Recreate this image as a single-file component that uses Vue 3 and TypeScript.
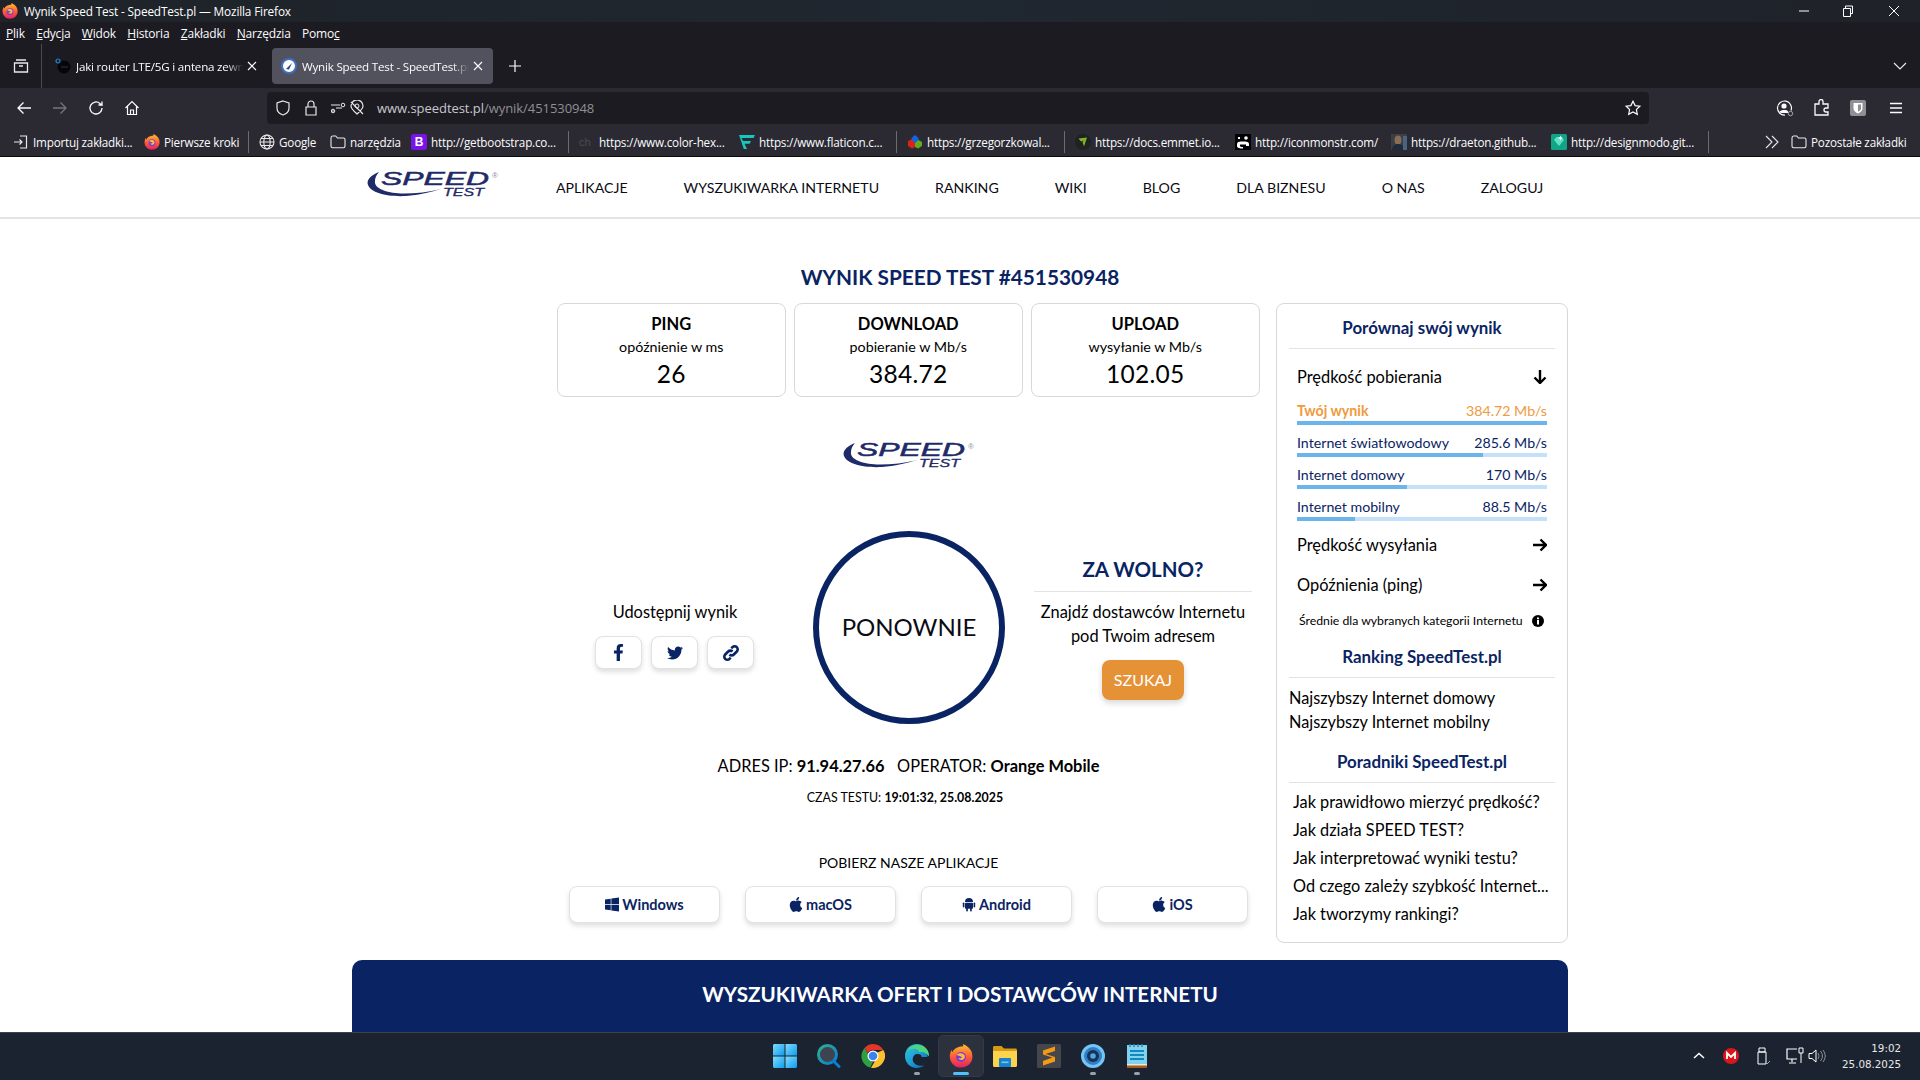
<script setup lang="ts">
interface Bookmark { icon: string; label: string; w: number; sep?: boolean }
const menu = [
  { before: '', key: 'P', after: 'lik' },
  { before: '', key: 'E', after: 'dycja' },
  { before: '', key: 'W', after: 'idok' },
  { before: '', key: 'H', after: 'istoria' },
  { before: '', key: 'Z', after: 'akładki' },
  { before: '', key: 'N', after: 'arzędzia' },
  { before: 'Pomo', key: 'c', after: '' },
]
const bookmarks: Bookmark[] = [
  { icon: 'i-import', label: 'Importuj zakładki...', w: 131 },
  { icon: 'i-firefox', label: 'Pierwsze kroki', w: 105, sep: true },
  { icon: 'i-globe', label: 'Google', w: 71 },
  { icon: 'i-folder', label: 'narzędzia', w: 81 },
  { icon: 'boot', label: 'http://getbootstrap.co...', w: 158, sep: true },
  { icon: 'ch', label: 'https://www.color-hex...', w: 160 },
  { icon: 'i-flat', label: 'https://www.flaticon.c...', w: 158, sep: true },
  { icon: 'i-cube', label: 'https://grzegorzkowal...', w: 158, sep: true },
  { icon: 'i-emmet', label: 'https://docs.emmet.io...', w: 160 },
  { icon: 'i-mons', label: 'http://iconmonstr.com/', w: 156 },
  { icon: 'i-photo', label: 'https://draeton.github...', w: 160 },
  { icon: 'i-gem', label: 'http://designmodo.git...', w: 158, sep: true },
]
const navLinks = ['APLIKACJE', 'WYSZUKIWARKA INTERNETU', 'RANKING', 'WIKI', 'BLOG', 'DLA BIZNESU', 'O NAS', 'ZALOGUJ']
const stats = [
  { title: 'PING', sub: 'opóźnienie w ms', value: '26' },
  { title: 'DOWNLOAD', sub: 'pobieranie w Mb/s', value: '384.72' },
  { title: 'UPLOAD', sub: 'wysyłanie w Mb/s', value: '102.05' },
]
const compare = [
  { label: 'Twój wynik', value: '384.72 Mb/s', pct: 100, mine: true },
  { label: 'Internet światłowodowy', value: '285.6 Mb/s', pct: 74.4, mine: false },
  { label: 'Internet domowy', value: '170 Mb/s', pct: 44, mine: false },
  { label: 'Internet mobilny', value: '88.5 Mb/s', pct: 23.2, mine: false },
]
const guides = ['Jak prawidłowo mierzyć prędkość?', 'Jak działa SPEED TEST?', 'Jak interpretować wyniki testu?', 'Od czego zależy szybkość Internet...', 'Jak tworzymy rankingi?']
const apps = [
  { icon: 'i-win', label: 'Windows' },
  { icon: 'i-apple', label: 'macOS' },
  { icon: 'i-android', label: 'Android' },
  { icon: 'i-apple', label: 'iOS' },
]
const dock = [
  { icon: 'i-start', state: '' },
  { icon: 'i-search', state: '' },
  { icon: 'i-chrome', state: '' },
  { icon: 'i-edge', state: 'dot' },
  { icon: 'i-firefox', state: 'active' },
  { icon: 'i-files', state: '' },
  { icon: 'i-sublime', state: '' },
  { icon: 'i-disc', state: 'dot' },
  { icon: 'i-notepad', state: 'dot' },
]
</script>

<template>
  <svg class="defs" width="0" height="0" aria-hidden="true">
    <defs>
      <linearGradient id="g-fox" x1="0" y1="0" x2="0" y2="1"><stop offset="0" stop-color="#ffc02e" /><stop offset=".55" stop-color="#ff5a36" /><stop offset="1" stop-color="#e3226a" /></linearGradient>
      <linearGradient id="g-win" x1="0" y1="0" x2="1" y2="1"><stop offset="0" stop-color="#7fdcfb" /><stop offset="1" stop-color="#0f9bf0" /></linearGradient>
      <linearGradient id="g-edge" x1="0" y1="0" x2="1" y2="1"><stop offset="0" stop-color="#39c6d8" /><stop offset=".5" stop-color="#1aa0d8" /><stop offset="1" stop-color="#0b5fb0" /></linearGradient>
      <linearGradient id="g-ring" x1="0" y1="0" x2="1" y2="1"><stop offset="0" stop-color="#2fae8f" /><stop offset="1" stop-color="#0a7ed0" /></linearGradient>
    </defs>
    <symbol id="i-firefox" viewBox="0 0 24 24">
      <path d="M12 2.500c3.500-.2 2.200-1.800 1.600-2.500 3 1 7.400 3.800 8.900 7.500C24 11.500 24 17 20 20.500 16.500 23.800 10 24.500 6 22 1.500 19 .2 14 1 10c.3-1.500.9-2.800 1.700-4l.6 2.200C4.500 5.500 8 2.800 12 2.500z" fill="url(#g-fox)" />
      <circle cx="12" cy="13" r="5" fill="#7a3fd0" />
      <path d="M7.500 11c2-2.500 6.500-2.500 8 .2 1 2-.3 4.800-3 4.800-1.700 0-2.800-1-2.900-2.300 1 .8 3 .8 3.300-.5-.7-1-3.500-1.500-5.400-2.200z" fill="#ffb74a" />
    </symbol>
    <symbol id="i-import" viewBox="0 0 16 16"><path d="M7 2h6.500v12H7M1 8h8M6.500 5.500 9 8l-2.500 2.500" fill="none" stroke="#e8e8ea" stroke-width="1.200" /></symbol>
    <symbol id="i-globe" viewBox="0 0 16 16"><g fill="none" stroke="#e8e8ea" stroke-width="1.100"><circle cx="8" cy="8" r="7" /><ellipse cx="8" cy="8" rx="3.200" ry="7" /><path d="M1 8h14M2 4.500h12M2 11.500h12" /></g></symbol>
    <symbol id="i-folder" viewBox="0 0 16 16"><path d="M1 4c0-1 .5-2 1.500-2h3.200L7.500 4h6c1 0 1.500.6 1.500 1.500V12c0 1-.5 1.700-1.500 1.700h-11C1.500 13.700 1 13 1 12z" fill="none" stroke="#e8e8ea" stroke-width="1.100" /></symbol>
    <symbol id="i-flat" viewBox="0 0 16 16"><path d="M0 1h16l-1.500 3H2.500L4 7h8l-1.400 2.800H5.500L8 15h.2L4.800 15z" fill="#16c7bd" /></symbol>
    <symbol id="i-cube" viewBox="0 0 16 16"><path d="M8 1l3.500 3v4.500L8 10.500 4.500 8.500V4z" fill="#1463e0" /><path d="M1 7l3.500-1.500L8 9v4l-3 1.500L1 12z" fill="#d9241c" /><path d="M8 9l3.500-3L15 8v4l-4 2.500L8 13z" fill="#5fae1c" /></symbol>
    <symbol id="i-emmet" viewBox="0 0 16 16"><circle cx="8" cy="8" r="8" fill="#20221f" /><path d="M3.500 4.500 12 3.500l-3 9-1.500-4.500 1.500-1.500-3 1z" fill="#7fb52c" /></symbol>
    <symbol id="i-mons" viewBox="0 0 16 16"><rect width="16" height="16" fill="#000" /><path d="M3 3l2 2M5 3 3 5" stroke="#fff" stroke-width="1" /><circle cx="11" cy="4" r="1.800" fill="#fff" /><path d="M2 10c0-2 2-2.500 6-2.500s6 .5 6 2.500v2h-3v-1.500H5V12c0 1 2 1 3 1v1.500C5 14.500 2 14 2 12z" fill="#fff" /></symbol>
    <symbol id="i-photo" viewBox="0 0 16 16"><rect width="16" height="16" fill="#3a3f46" /><ellipse cx="7" cy="6" rx="3.500" ry="4.500" fill="#8a6d55" /><path d="M1 16c0-4 3-6 6-6s6 2 7 6z" fill="#1f2a3a" /><rect x="12" y="2" width="4" height="14" fill="#4a6480" /></symbol>
    <symbol id="i-gem" viewBox="0 0 16 16"><rect width="16" height="16" rx="1.500" fill="#10a586" /><path d="M3 6l2.500-3h5L13 6l-5 6z" fill="#5fe0c4" /><path d="M9.500 1.500l.7 1.800 1.800.7-1.800.7-.7 1.800-.7-1.800L7 4l1.800-.7z" fill="#fff" /></symbol>
    <symbol id="i-win" viewBox="0 0 448 512"><path d="M0 93.700l183.600-25.300v177.400H0V93.700zm0 324.600l183.600 25.300V268.400H0v149.900zm203.800 28L448 480V268.400H203.800v177.900zm0-380.600v180.100H448V32L203.800 65.700z" fill="currentColor" /></symbol>
    <symbol id="i-apple" viewBox="0 0 384 512"><path d="M318.700 268.700c-.2-36.700 16.400-64.400 50-84.800-18.800-26.900-47.200-41.700-84.700-44.600-35.500-2.800-74.300 20.700-88.500 20.700-15 0-49.400-19.700-76.400-19.700C63.300 141.200 4 184.800 4 273.500q0 39.300 14.400 81.200c12.800 36.700 59 126.700 107.200 125.200 25.200-.6 43-17.900 75.800-17.900 31.800 0 48.300 17.900 76.400 17.900 48.600-.7 90.400-82.500 102.600-119.300-65.200-30.700-61.700-90-61.700-91.900zm-56.600-164.200c27.300-32.400 24.800-61.900 24-72.500-24.100 1.400-52 16.400-67.900 34.900-17.500 19.800-27.800 44.300-25.600 71.900 26.100 2 49.900-11.400 69.500-34.300z" fill="currentColor" /></symbol>
    <symbol id="i-android" viewBox="1 0 14 16"><g fill="currentColor"><path d="M4 5.500a4 4 0 0 1 8 0z" /><rect x="4" y="6.200" width="8" height="6" rx=".8" /><rect x="1.800" y="6" width="1.600" height="5" rx=".8" /><rect x="12.600" y="6" width="1.600" height="5" rx=".8" /><rect x="5.200" y="11" width="1.700" height="4" rx=".8" /><rect x="9.100" y="11" width="1.700" height="4" rx=".8" /></g></symbol>
    <symbol id="i-start" viewBox="0 0 24 24"><g fill="url(#g-win)"><path d="M0 1.500C0 .6.600 0 1.500 0h10v11.500H0z" /><path d="M12.500 0h10c.9 0 1.500.6 1.500 1.500v10H12.500z" /><path d="M0 12.500h11.500V24h-10C.6 24 0 23.400 0 22.500z" /><path d="M12.500 12.500H24v10c0 .9-.6 1.500-1.500 1.500h-10z" /></g></symbol>
    <symbol id="i-search" viewBox="0 0 24 24"><circle cx="10.500" cy="10.500" r="9" fill="#3d4350" stroke="url(#g-ring)" stroke-width="3" /><path d="M16.500 17l5.500 5.500" stroke="#0a7ed0" stroke-width="3" stroke-linecap="round" /></symbol>
    <symbol id="i-chrome" viewBox="0 0 24 24"><path d="M12 0a12 12 0 0 1 10.400 6H12a6 6 0 0 0-5.200 3L3.600 3.900A12 12 0 0 1 12 0z" fill="#e5352b" /><path d="M3.600 3.900 8.800 13a4 4 0 0 0 3.200 5l-2.900 5.600A12 12 0 0 1 3.600 3.900z" fill="#2ea043" /><path d="M22.400 6A12 12 0 0 1 10 23.800L15.200 15a6 6 0 0 0 0-6z" fill="#fbc02d" /><circle cx="12" cy="12" r="5.500" fill="#fff" /><circle cx="12" cy="12" r="4.300" fill="#3b82f0" /></symbol>
    <symbol id="i-edge" viewBox="0 0 24 24"><path d="M12 0C5 0 0 5.500 0 12c0 7 5.500 12 11.500 12 3 0 5.800-1 8-2.800-3.500 1.200-8.500.6-10.800-2.700-1.600-2.300-1.300-5.500.8-7.500 1.200-1.200 4-1.400 5.800-.5 1 .6 1.300 1.700 1.200 2.500h5.900C24 6 19 0 12 0z" fill="url(#g-edge)" /><path d="M14 8c3.500-.5 8 .5 10 4.500C24.500 6 19.500 1 13 1 8 1 4 3.500 2.500 7 5 4.500 10 4 13 6z" fill="#4fd47c" /></symbol>
    <symbol id="i-files" viewBox="0 0 24 24"><path d="M0 3.500C0 2.600.6 2 1.500 2h7l2.500 2.500h11.500c.9 0 1.500.6 1.500 1.500v2H0z" fill="#d89a16" /><path d="M0 7h24v14.500c0 .9-.6 1.500-1.500 1.500h-21C.6 23 0 22.400 0 21.500z" fill="#fcd34d" /><rect x="6" y="14" width="12" height="9" rx="1" fill="#1782d0" /><rect x="8.500" y="17.500" width="7" height="1.600" fill="#7fc4f0" /></symbol>
    <symbol id="i-sublime" viewBox="0 0 24 24"><rect width="24" height="24" rx="1.500" fill="#45464a" /><path d="M6 8l12-4v4.500L8.500 11.500 18 14.500v4.500L6 23v-4.500L15.500 15 6 12z" fill="#f59a16" transform="translate(0 -1.500)" /></symbol>
    <symbol id="i-disc" viewBox="0 0 24 24"><circle cx="12" cy="12" r="10.500" fill="#2d7fc8" stroke="#78c3f5" stroke-width="3" /><circle cx="12" cy="12" r="6" fill="#18324f" /><circle cx="12" cy="12" r="2.800" fill="#4ea6e8" /></symbol>
    <symbol id="i-notepad" viewBox="0 0 20 24"><rect y="1" width="20" height="20" fill="#7fd3ec" /><rect y="21" width="20" height="3" fill="#a85a16" /><rect y="20" width="20" height="1.500" fill="#e8e8e8" /><path d="M3 7h14M3 11h14M3 15h14" stroke="#1487c2" stroke-width="2" /><path d="M3 0v3M7 0v3M11 0v3M15 0v3" stroke="#2a86b8" stroke-width="1.500" /></symbol>
  </svg>

  <div class="screen">
    <header class="titlebar">
      <svg class="fav16"><use href="#i-firefox" /></svg>
      <span class="title-text">Wynik Speed Test - SpeedTest.pl — Mozilla Firefox</span>
      <div class="win-ctrl">
        <svg width="12" height="12" viewBox="0 0 12 12"><path d="M1 6h10" stroke="#fff" /></svg>
        <svg width="12" height="12" viewBox="0 0 12 12"><path d="M1.500 3.500h7v8h-7zM3.500 3V1h7v7.500H9" fill="none" stroke="#fff" /></svg>
        <svg width="12" height="12" viewBox="0 0 12 12"><path d="M1 1l10 10M11 1 1 11" stroke="#fff" /></svg>
      </div>
    </header>
    <nav class="menubar">
      <span v-for="m in menu" :key="m.key" class="menu-item">{{ m.before }}<u>{{ m.key }}</u>{{ m.after }}</span>
    </nav>
    <div class="tabbar">
      <div class="tab-manager">
        <svg width="16" height="16" viewBox="0 0 16 16"><path d="M3 2h10M1.500 5h13v9h-13zM6 8h4" fill="none" stroke="#e8e8ea" stroke-width="1.300" /></svg>
      </div>
      <div class="tab">
        <svg width="16" height="16" viewBox="0 0 16 16"><circle cx="9" cy="9" r="6.500" fill="#04060a" /><path d="M6 8h7v2H6z" fill="#1c1b22" /><circle cx="3" cy="3" r="2" fill="none" stroke="#1e88d0" stroke-width="1.200" /></svg>
        <span class="tab-label fade">Jaki router LTE/5G i antena zewnętrzna</span>
        <svg class="tab-x" width="10" height="10" viewBox="0 0 10 10"><path d="M1 1l8 8M9 1 1 9" stroke="#fbfbfe" stroke-width="1.100" /></svg>
      </div>
      <div class="tab tab-active">
        <svg width="16" height="16" viewBox="0 0 16 16"><circle cx="8" cy="8" r="7" fill="#fff" stroke="#3d6fc4" stroke-width="2" /><path d="M5 11l6-6-3 6.500z" fill="#27447a" /></svg>
        <span class="tab-label fade">Wynik Speed Test - SpeedTest.pl — Mozilla</span>
        <svg class="tab-x" width="10" height="10" viewBox="0 0 10 10"><path d="M1 1l8 8M9 1 1 9" stroke="#fbfbfe" stroke-width="1.100" /></svg>
      </div>
      <svg class="tab-plus" width="14" height="14" viewBox="0 0 14 14"><path d="M7 1v12M1 7h12" stroke="#fbfbfe" stroke-width="1.200" /></svg>
      <svg class="tab-list" width="14" height="14" viewBox="0 0 14 14"><path d="M1 4l6 6 6-6" fill="none" stroke="#e8e8ea" stroke-width="1.200" /></svg>
    </div>
    <div class="toolbar">
      <div class="tool-nav">
        <svg width="16" height="16" viewBox="0 0 16 16"><path d="M15 8H2M7.500 2.500 2 8l5.500 5.500" fill="none" stroke="#fbfbfe" stroke-width="1.300" /></svg>
        <svg width="16" height="16" viewBox="0 0 16 16"><path d="M1 8h13M8.500 2.500 14 8l-5.500 5.500" fill="none" stroke="#74747a" stroke-width="1.300" /></svg>
        <svg width="16" height="16" viewBox="0 0 16 16"><path d="M14 8a6 6 0 1 1-2-4.500L14 5V1.500M14 5h-3.500" fill="none" stroke="#fbfbfe" stroke-width="1.300" /></svg>
        <svg width="16" height="16" viewBox="0 0 16 16"><path d="M1.500 8 8 1.500 14.500 8M3.500 6.500V14.500h9V6.500M6.500 14.500V10h3v4.500" fill="none" stroke="#fbfbfe" stroke-width="1.200" /></svg>
      </div>
      <div class="urlbar">
        <svg width="16" height="16" viewBox="0 0 16 16"><path d="M8 1l6 2v5c0 3.500-3 6-6 7-3-1-6-3.500-6-7V3z" fill="none" stroke="#e8e8ea" stroke-width="1.200" /></svg>
        <svg class="u-lock" width="14" height="16" viewBox="0 0 14 16"><path d="M2 7h10v8H2zM4 7V4a3 3 0 0 1 6 0v3" fill="none" stroke="#e8e8ea" stroke-width="1.200" /></svg>
        <svg class="u-perm" width="15" height="16" viewBox="0 0 15 16"><path d="M0 5h9M11 8H5M0 11h3" stroke="#e8e8ea" stroke-width="1.100" /><circle cx="12" cy="5" r="1.800" fill="none" stroke="#e8e8ea" /><circle cx="2" cy="11" r="1.800" fill="none" stroke="#e8e8ea" /></svg>
        <svg class="u-track" width="16" height="16" viewBox="0 0 16 16"><path d="M8 14C4 10.500 2 8.500 2 6a6 6 0 0 1 12 0c0 2.500-2 4.500-6 8zM2 2l12 12" fill="none" stroke="#e8e8ea" stroke-width="1.200" /><circle cx="8" cy="6" r="2" fill="none" stroke="#e8e8ea" /></svg>
        <span class="url"><b>www.speedtest.pl</b>/wynik/451530948</span>
        <svg class="u-star" width="16" height="16" viewBox="0 0 16 16"><path d="M8 1.200l2.100 4.400 4.800.6-3.500 3.300.9 4.800L8 12l-4.300 2.300.9-4.800L1.100 6.200l4.800-.6z" fill="none" stroke="#fbfbfe" stroke-width="1.200" /></svg>
      </div>
      <div class="tool-right">
        <svg width="18" height="18" viewBox="0 0 18 18"><path d="M15 11.500A7 7 0 1 0 9 16" fill="none" stroke="#fbfbfe" stroke-width="1.200" /><circle cx="8" cy="7" r="2.600" fill="#fbfbfe" /><path d="M3.500 13c1-2.500 8-2.500 8.500-.5V14H5z" fill="#fbfbfe" /><circle cx="14.500" cy="14.500" r="2.200" fill="none" stroke="#aaa" /></svg>
        <svg width="16" height="18" viewBox="0 0 16 18"><path d="M1 6h4V3.500a2 2 0 0 1 4 0V6h5v4h-2a2 2 0 0 0 0 4h2v3H1z" fill="none" stroke="#fbfbfe" stroke-width="1.300" transform="translate(0 -1)" /></svg>
        <svg width="16" height="16" viewBox="0 0 16 16"><rect width="16" height="16" rx="2" fill="#8f8f94" /><path d="M3.500 3h9v5.500c0 2.500-2.500 4-4.500 5-2-1-4.500-2.500-4.500-5z" fill="#fff" /><path d="M8 4.500h3V8.500c0 1.500-1.500 2.500-3 3.200z" fill="#8f8f94" /></svg>
        <svg class="hamburger" width="14" height="14" viewBox="0 0 14 14"><path d="M1 2.500h12M1 7h12M1 11.500h12" stroke="#fbfbfe" stroke-width="1.300" /></svg>
      </div>
    </div>
    <div class="bookmarks">
      <template v-for="b in bookmarks" :key="b.label">
        <div class="bm" :style="{ width: b.w + 'px' }">
          <span v-if="b.icon === 'boot'" class="bm-ic bm-boot">B</span>
          <span v-else-if="b.icon === 'ch'" class="bm-ic bm-ch">ch</span>
          <svg v-else class="bm-ic"><use :href="'#' + b.icon" /></svg>
          <span class="bm-label">{{ b.label }}</span>
        </div>
        <i v-if="b.sep" class="bm-sep"></i>
      </template>
      <svg class="bm-more" width="14" height="14" viewBox="0 0 14 14"><path d="M1 1l6 6-6 6M7 1l6 6-6 6" fill="none" stroke="#e8e8ea" stroke-width="1.100" /></svg>
      <div class="bm bm-other">
        <svg class="bm-ic"><use href="#i-folder" /></svg>
        <span class="bm-label">Pozostałe zakładki</span>
      </div>
    </div>

    <main class="page">
      <nav class="site-nav">
        <svg class="logo" width="135" height="32" viewBox="0 0 135 32">
          <path d="M12 3C4 6-1 11 1 16c3 8 20 12 38 11 12-1 26-4 35-7-12 3-25 4.500-37 4.500C21 24.500 9 20 8 14c-.4-4 1-8 4-11z" fill="#1f2a68" />
          <text x="14" y="16" font-family="Liberation Sans, sans-serif" font-style="italic" font-size="19" stroke="#1f2a68" stroke-width=".5" textLength="108" lengthAdjust="spacingAndGlyphs" fill="#1f2a68">SPEED</text>
          <text x="76" y="26.500" font-family="Liberation Sans, sans-serif" font-style="italic" font-size="11" stroke="#1f2a68" stroke-width=".3" textLength="41" lengthAdjust="spacingAndGlyphs" fill="#1f2a68">TEST</text>
          <text x="125" y="9" font-family="Liberation Sans, sans-serif" font-size="8" fill="#8a8fa8">®</text>
        </svg>
        <a v-for="n in navLinks" :key="n" class="nav-link">{{ n }}</a>
      </nav>

      <div class="content">
        <h1 class="result-title">WYNIK SPEED TEST #451530948</h1>
        <div class="result-row">
          <section class="main-col">
            <div class="stats">
              <div v-for="s in stats" :key="s.title" class="stat">
                <div class="stat-title">{{ s.title }}</div>
                <div class="stat-sub">{{ s.sub }}</div>
                <div class="stat-value">{{ s.value }}</div>
              </div>
            </div>

            <svg class="logo logo-mid" width="135" height="32" viewBox="0 0 135 32">
              <path d="M12 3C4 6-1 11 1 16c3 8 20 12 38 11 12-1 26-4 35-7-12 3-25 4.500-37 4.500C21 24.500 9 20 8 14c-.4-4 1-8 4-11z" fill="#1f2a68" />
              <text x="14" y="16" font-family="Liberation Sans, sans-serif" font-style="italic" font-size="19" stroke="#1f2a68" stroke-width=".5" textLength="108" lengthAdjust="spacingAndGlyphs" fill="#1f2a68">SPEED</text>
              <text x="76" y="26.500" font-family="Liberation Sans, sans-serif" font-style="italic" font-size="11" stroke="#1f2a68" stroke-width=".3" textLength="41" lengthAdjust="spacingAndGlyphs" fill="#1f2a68">TEST</text>
              <text x="125" y="9" font-family="Liberation Sans, sans-serif" font-size="8" fill="#8a8fa8">®</text>
            </svg>

            <div class="action-row">
              <div class="share">
                <div class="share-label">Udostępnij wynik</div>
                <div class="share-btns">
                  <button class="share-btn">
                    <svg width="11" height="17" viewBox="0 0 320 512"><path d="M279.140 288l14.220-92.660h-88.910v-60.130c0-25.350 12.420-50.060 52.240-50.060h40.420V6.260S260.430 0 225.360 0c-73.220 0-121.080 44.380-121.080 124.720v70.620H22.890V288h81.390v224h100.170V288z" fill="#0a2463" /></svg>
                  </button>
                  <button class="share-btn">
                    <svg width="16" height="16" viewBox="0 0 512 512"><path d="M459.370 151.716c.325 4.548.325 9.097.325 13.645 0 138.720-105.583 298.558-298.558 298.558-59.452 0-114.680-17.219-161.137-47.106 8.447.974 16.568 1.299 25.340 1.299 49.055 0 94.213-16.568 130.274-44.832-46.132-.975-84.792-31.188-98.112-72.772 6.498.974 12.995 1.624 19.818 1.624 9.421 0 18.843-1.300 27.614-3.573-48.081-9.747-84.143-51.980-84.143-102.985v-1.299c13.969 7.797 30.214 12.670 47.431 13.319-28.264-18.843-46.781-51.005-46.781-87.391 0-19.492 5.197-37.360 14.294-52.954 51.655 63.675 129.300 105.258 216.365 109.807-1.624-7.797-2.599-15.918-2.599-24.040 0-57.828 46.782-104.934 104.934-104.934 30.213 0 57.502 12.670 76.670 33.137 23.715-4.548 46.456-13.320 66.599-25.340-7.798 24.366-24.366 44.833-46.132 57.827 21.117-2.273 41.584-8.122 60.426-16.243-14.292 20.791-32.161 39.308-52.628 54.253z" fill="#0a2463" /></svg>
                  </button>
                  <button class="share-btn">
                    <svg width="16" height="16" viewBox="0 0 16 16"><g fill="none" stroke="#0a2463" stroke-width="2.600"><path d="M6.500 9.500a3 3 0 0 0 4.300 0l3-3a3 3 0 0 0-4.300-4.300L8.300 3.400" /><path d="M9.500 6.500a3 3 0 0 0-4.300 0l-3 3a3 3 0 0 0 4.300 4.300l1.200-1.200" /></g></svg>
                  </button>
                </div>
              </div>
              <div class="again">PONOWNIE</div>
              <div class="slow">
                <h2 class="slow-title">ZA WOLNO?</h2>
                <p class="slow-text">Znajdź dostawców Internetu<br />pod Twoim adresem</p>
                <button class="search-btn">SZUKAJ</button>
              </div>
            </div>

            <p class="ip">ADRES IP: <b>91.94.27.66</b>&nbsp;&nbsp; OPERATOR: <b>Orange Mobile</b></p>
            <p class="time">CZAS TESTU: <b>19:01:32, 25.08.2025</b></p>
            <p class="apps-label">POBIERZ NASZE APLIKACJE</p>
            <div class="apps">
              <button v-for="a in apps" :key="a.label" class="app-btn">
                <svg class="app-ic"><use :href="'#' + a.icon" /></svg>{{ a.label }}
              </button>
            </div>
          </section>

          <aside class="side">
            <h3 class="side-h">Porównaj swój wynik</h3>
            <hr class="rule" />
            <div class="acc acc-first">
              <span>Prędkość pobierania</span>
              <svg width="14" height="14" viewBox="0 0 14 14"><path d="M7 0v13M1.500 7.500 7 13l5.500-5.500" fill="none" stroke="#000" stroke-width="2.400" /></svg>
            </div>
            <div v-for="c in compare" :key="c.label" class="cmp" :class="{ mine: c.mine }">
              <div class="cmp-row"><span>{{ c.label }}</span><span>{{ c.value }}</span></div>
              <div class="bar"><div class="bar-fill" :style="{ width: c.pct + '%' }"></div></div>
            </div>
            <div class="acc acc-up">
              <span>Prędkość wysyłania</span>
              <svg width="14" height="14" viewBox="0 0 14 14"><path d="M0 7h13M7.500 1.500 13 7l-5.500 5.500" fill="none" stroke="#000" stroke-width="2.400" /></svg>
            </div>
            <div class="acc acc-ping">
              <span>Opóźnienia (ping)</span>
              <svg width="14" height="14" viewBox="0 0 14 14"><path d="M0 7h13M7.500 1.500 13 7l-5.500 5.500" fill="none" stroke="#000" stroke-width="2.400" /></svg>
            </div>
            <div class="avg">
              <span>Średnie dla wybranych kategorii Internetu</span>
              <svg width="12" height="12" viewBox="0 0 12 12"><circle cx="6" cy="6" r="6" fill="#000" /><rect x="5" y="5" width="2" height="4.500" fill="#fff" /><rect x="5" y="2.500" width="2" height="1.700" fill="#fff" /></svg>
            </div>
            <h3 class="side-h side-h2">Ranking SpeedTest.pl</h3>
            <hr class="rule" />
            <div class="rank">
              <div>Najszybszy Internet domowy</div>
              <div>Najszybszy Internet mobilny</div>
            </div>
            <h3 class="side-h side-h2">Poradniki SpeedTest.pl</h3>
            <hr class="rule" />
            <ul class="guides">
              <li v-for="g in guides" :key="g">{{ g }}</li>
            </ul>
          </aside>
        </div>
        <div class="banner">WYSZUKIWARKA OFERT I DOSTAWCÓW INTERNETU</div>
      </div>
    </main>

    <footer class="taskbar">
      <div class="dock">
        <div v-for="d in dock" :key="d.icon" class="dock-item" :class="d.state">
          <svg class="dock-ic"><use :href="'#' + d.icon" /></svg>
        </div>
      </div>
      <div class="tray">
        <svg width="12" height="12" viewBox="0 0 12 12"><path d="M1 8l5-4.500L11 8" fill="none" stroke="#fff" stroke-width="1.500" /></svg>
        <svg class="tray-mega" width="16" height="16" viewBox="0 0 16 16"><circle cx="8" cy="8" r="8" fill="#d9161c" /><path d="M4 11V5l4 4 4-4v6" fill="none" stroke="#fff" stroke-width="1.800" /></svg>
        <svg class="tray-usb" width="14" height="18" viewBox="0 0 14 18"><path d="M3 1h6v4H3zM2 5h8v12H2z" fill="none" stroke="#fff" /><path d="M9 15l2 2 3-3" fill="none" stroke="#9aa" /></svg>
        <svg class="tray-net" width="18" height="18" viewBox="0 0 18 18"><path d="M11 2H1v10h10M6 12v3M3 16h7" fill="none" stroke="#fff" stroke-width="1.200" /><path d="M13 1h4v5h-4zM15 6v10" fill="none" stroke="#fff" /></svg>
        <svg class="tray-vol" width="18" height="14" viewBox="0 0 18 14"><path d="M1 4.500h3L8 1v12L4 9.500H1z" fill="none" stroke="#fff" /><path d="M10 4a5 5 0 0 1 0 6M12.500 2a8 8 0 0 1 0 10M15 1a10 10 0 0 1 0 12" fill="none" stroke="#8a8f98" /></svg>
        <div class="clock"><div>19:02</div><div>25.08.2025</div></div>
      </div>
    </footer>
  </div>
</template>

<style>
html, body { margin: 0; padding: 0; overflow: hidden; background: #fff; }
</style>

<style scoped>
.defs { position: absolute; }
.screen { width: 1920px; height: 1080px; display: flex; flex-direction: column; overflow: hidden; font-family: "Open Sans", "Noto Sans", sans-serif; }
.titlebar { height: 22px; flex: none; display: flex; align-items: center; background: linear-gradient(90deg, #1f2329, #1f2730 50%, #1f2229); color: #fff; font-size: 11.800px; padding-left: 2px; }
.fav16 { width: 16px; height: 16px; }
.title-text { margin-left: 6px; letter-spacing: -.15px; }
.win-ctrl { margin-left: auto; display: flex; gap: 34px; padding-right: 20px; }
.win-ctrl svg:first-child { margin-right: -2px; }
.menubar { height: 22px; flex: none; background: #1c1b22; color: #fbfbfe; font-size: 12px; display: flex; align-items: center; padding-left: 6px; gap: 11.400px; letter-spacing: -.2px; }
.tabbar { height: 44px; flex: none; background: #1c1b22; color: #fbfbfe; display: flex; align-items: center; position: relative; font-size: 11.600px; }
.tab-manager { width: 42px; height: 44px; box-sizing: border-box; display: flex; align-items: center; justify-content: center; border-right: 1px solid #4a4a50; }
.tab { width: 222px; height: 36px; box-sizing: border-box; display: flex; align-items: center; border-radius: 4px; padding: 0 6px 0 13px; }
.tab-active { width: 221px; background: #52525e; margin-left: 8px; padding-left: 9px; }
.tab-label { margin-left: 5px; width: 167px; overflow: hidden; white-space: nowrap; letter-spacing: -.2px; }
.fade { -webkit-mask-image: linear-gradient(90deg, #000 90%, transparent); mask-image: linear-gradient(90deg, #000 90%, transparent); }
.tab-x { margin-left: 4px; flex: none; }
.tab-plus { margin-left: 15px; }
.tab-list { margin-left: auto; margin-right: 13px; }
.toolbar { height: 36px; flex: none; box-sizing: border-box; padding-top: 4px; background: #2b2a33; display: flex; align-items: center; }
.tool-nav { width: 267px; display: flex; align-items: center; padding-left: 16px; gap: 20px; box-sizing: border-box; }
.urlbar { width: 1382px; height: 32px; background: #1c1b22; border-radius: 4px; display: flex; align-items: center; padding-left: 8px; box-sizing: border-box; }
.u-lock { margin-left: 13px; }
.u-perm { margin-left: 13px; }
.u-track { margin-left: 3px; }
.url { margin-left: 12px; font-size: 13px; color: #8f8f94; letter-spacing: -.05px; }
.url b { font-weight: 400; color: #c8c8cc; }
.u-star { margin-left: auto; margin-right: 8px; }
.tool-right { flex: 1; display: flex; align-items: center; padding-left: 127px; gap: 20px; }
.hamburger { margin-left: 3px; }
.bookmarks { height: 32px; flex: none; box-sizing: content-box; background: #2b2a33; border-bottom: 1px solid #0c0c0d; display: flex; align-items: center; padding-left: 13px; color: #fbfbfe; font-size: 11.700px; }
.bm { display: flex; align-items: center; flex: none; overflow: hidden; margin-top: 4px; }
.bm-ic { width: 16px; height: 16px; flex: none; color: #fff; }
.bm-boot { background: #7a12ea; border-radius: 2.500px; font: 700 12px/16px "Liberation Sans", sans-serif; text-align: center; }
.bm-ch { color: #4b4b52; font: 11px/16px "Liberation Sans", sans-serif; }
.bm-label { margin-left: 4px; white-space: nowrap; letter-spacing: -.2px; }
.bm-sep { width: 1px; height: 22px; background: #6b6b70; flex: none; margin: 4px 10px 0 -1px; }
.bm-more { margin: 4px 0 0 46px; flex: none; }
.bm-other { margin-left: 12px; }
.page { flex: 1; min-height: 0; overflow: hidden; background: #fff; font-family: Lato, "Open Sans", sans-serif; color: #000; }
.site-nav { height: 62px; box-sizing: border-box; border-bottom: 2px solid #e3e3e3; display: flex; align-items: center; padding-left: 367px; }
.logo { flex: none; display: block; }
.site-nav .logo { margin-right: 54px; margin-top: -4px; }
.nav-link { font-size: 14.150px; color: #0b0b14; margin-right: 56px; white-space: nowrap; }
.content { width: 1216px; margin: 0 auto; }
.result-title { margin: 44px 0 12px; height: 28px; line-height: 28px; font-size: 20.800px; font-weight: 700; text-align: center; color: #0a2463; }
.result-row { display: flex; align-items: flex-start; }
.main-col { width: 703px; margin-left: 205px; }
.stats { display: flex; gap: 8.500px; }
.stat { width: 228.500px; height: 94px; box-sizing: border-box; border: 1px solid #d8d8d8; border-radius: 8px; text-align: center; padding-top: 9px; }
.stat-title { font-size: 16.500px; font-weight: 700; line-height: 22px; }
.stat-sub { font-size: 14.300px; line-height: 24px; }
.stat-value { font-size: 24.500px; line-height: 30px; letter-spacing: .3px; }
.logo-mid { margin: 43px 0 0 286px; }
.action-row { display: flex; margin-top: 59px; padding-left: 38px; align-items: flex-start; }
.share { width: 160px; padding-top: 69px; text-align: center; }
.share-label { line-height: 24px; font-size: 16.400px; }
.share-btns { display: flex; gap: 9px; margin-top: 12px; }
.share-btn { width: 47px; height: 33px; box-sizing: border-box; background: #fff; border: 1px solid #e2e2e2; border-radius: 8px; box-shadow: 0 3px 5px rgba(0,0,0,.13); padding: 0; display: flex; align-items: center; justify-content: center; }
.again { width: 192px; height: 193px; box-sizing: border-box; border: 6px solid #0a2463; border-radius: 50%; margin-left: 58px; display: flex; align-items: center; justify-content: center; font-size: 24px; color: #0b0b14; padding-bottom: 2px; }
.slow { width: 218px; margin-left: 29px; padding-top: 24px; text-align: center; }
.slow-title { margin: 0; font-size: 20.500px; font-weight: 700; line-height: 28px; color: #0a2463; padding-bottom: 8px; border-bottom: 1px solid #e3e3e3; }
.slow-text { margin: 8px 0 0; font-size: 16.400px; line-height: 24px; }
.search-btn { margin-top: 12px; width: 82px; height: 40px; border: 0; border-radius: 8px; background: #e59237; color: #fff; font: 400 16px Lato, sans-serif; padding: 0 0 2px; box-shadow: 0 3px 6px rgba(0,0,0,.16); }
.ip { margin: 30px 0 0; line-height: 24px; font-size: 16.400px; text-align: center; }
.ip b { font-weight: 700; }
.time { margin: 11px 0 0; line-height: 18px; font-size: 12.400px; text-align: center; padding-right: 7px; }
.apps-label { margin: 46px 0 0; line-height: 20px; font-size: 14px; text-align: center; }
.apps { display: flex; justify-content: center; gap: 25px; margin-top: 13px; }
.app-btn { width: 151px; height: 37px; box-sizing: border-box; border: 1px solid #e2e2e2; border-radius: 8px; background: #fff; color: #0a2463; font: 700 14.500px Lato, sans-serif; display: flex; align-items: center; justify-content: center; box-shadow: 0 3px 5px rgba(0,0,0,.13); padding: 0 0 1px; }
.app-ic { width: 14px; height: 17px; margin-right: 3px; }
.side { width: 292px; height: 640px; box-sizing: border-box; margin-left: 16px; border: 1px solid #d8d8d8; border-radius: 8px; padding: 12px 12px 0; }
.side-h { margin: 0; text-align: center; font-size: 16.900px; font-weight: 700; line-height: 24px; color: #0a2463; }
.side-h2 { margin-top: 16px; }
.rule { border: 0; border-top: 1px solid #e3e3e3; margin: 8px 0 0; }
.acc { display: flex; justify-content: space-between; align-items: center; line-height: 24px; padding: 0 8px; font-size: 16.400px; }
.acc-first { margin-top: 16px; }
.acc-up { margin-top: 12px; }
.acc-ping { margin-top: 16px; }
.cmp { padding: 0 8px; margin-top: 8px; color: #0a2463; font-size: 14.200px; }
.acc-first + .cmp { margin-top: 12px; }
.cmp-row { display: flex; justify-content: space-between; line-height: 20px; white-space: nowrap; }
.mine { color: #ef9a3d; }
.mine .cmp-row span:first-child { font-weight: 700; }
.bar { height: 4px; background: #c5e0fa; }
.bar-fill { height: 4px; background: #6cb4ec; }
.avg { margin-top: 16px; display: flex; justify-content: space-between; align-items: center; padding: 0 11px 0 10px; line-height: 16px; font-size: 12.250px; white-space: nowrap; }
.rank { margin: 8px 0 1px; font-size: 16.300px; line-height: 24px; }
.guides { list-style: none; margin: 7px 0 0; padding: 0 0 0 4px; font-size: 16.300px; line-height: 24px; white-space: nowrap; }
.guides li + li { margin-top: 4px; }
.banner { margin-top: 17px; height: 80px; box-sizing: border-box; padding-top: 19px; border-radius: 10px 10px 0 0; background: #0a2463; color: #fff; font-size: 20.600px; font-weight: 700; line-height: 30px; text-align: center; }
.taskbar { height: 48px; flex: none; box-sizing: border-box; padding-bottom: 1px; background: #1b2330; border-top: 1px solid #3c414b; display: flex; align-items: center; position: relative; }
.dock { display: flex; margin-left: 763px; }
.dock-item { width: 44px; height: 40px; display: flex; align-items: center; justify-content: center; position: relative; border-radius: 4px; }
.dock-ic { width: 24px; height: 24px; }
.dock-item.active { background: #2b323e; outline: 1px solid #343b47; }
.dock-item.active::after { content: ""; position: absolute; left: 14px; bottom: 1px; width: 16px; height: 3px; border-radius: 2px; background: #4cc2ff; }
.dock-item.dot::after { content: ""; position: absolute; left: 19px; bottom: 1px; width: 6px; height: 3px; border-radius: 2px; background: #9aa0a8; }
.tray { margin-left: auto; display: flex; align-items: center; padding-right: 19px; color: #e8e8e8; }
.tray-mega { margin-left: 18px; }
.tray-usb { margin-left: 17px; }
.tray-net { margin-left: 16px; }
.tray-vol { margin-left: 4px; }
.clock { margin-left: 16.500px; text-align: right; font-family: "DejaVu Sans", sans-serif; font-size: 10.300px; line-height: 16px; }
</style>
